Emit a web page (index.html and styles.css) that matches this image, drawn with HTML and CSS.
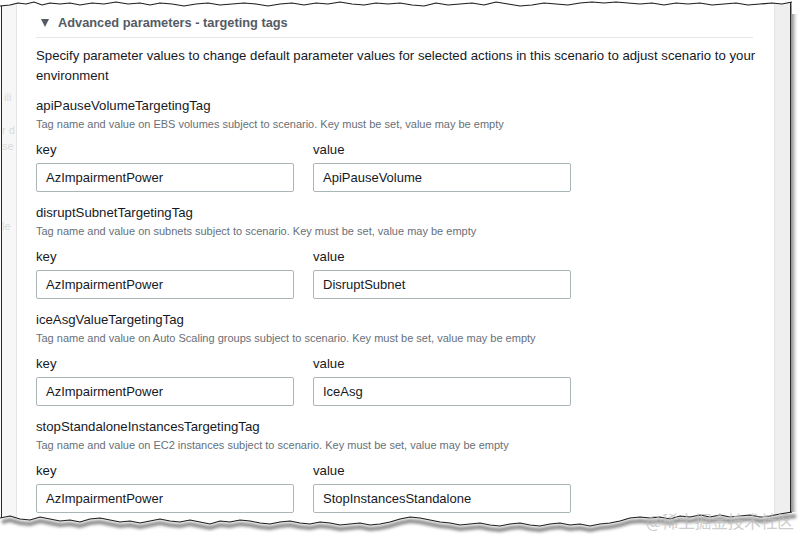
FILE: index.html
```html
<!DOCTYPE html>
<html>
<head>
<meta charset="utf-8">
<link rel="stylesheet" href="styles.css">
</head>
<body>
<div class="page">
  <div class="sheet">
    <div class="side-left">
      <div class="ghost g1">ili</div>
      <div class="ghost g2">r d</div>
      <div class="ghost g3">se</div>
      <div class="ghost g4">le</div>
    </div>
    <div class="panel">
      <div class="expander"><span class="caret"></span>Advanced parameters - targeting tags</div>
      <p class="intro">Specify parameter values to change default parameter values for selected actions in this scenario to adjust scenario to your environment</p>

      <div class="param">
        <div class="param-name">apiPauseVolumeTargetingTag</div>
        <div class="param-desc">Tag name and value on EBS volumes subject to scenario. Key must be set, value may be empty</div>
        <div class="pair">
          <div class="field"><div class="field-label">key</div><div class="input">AzImpairmentPower</div></div>
          <div class="field"><div class="field-label">value</div><div class="input">ApiPauseVolume</div></div>
        </div>
      </div>

      <div class="param">
        <div class="param-name">disruptSubnetTargetingTag</div>
        <div class="param-desc">Tag name and value on subnets subject to scenario. Key must be set, value may be empty</div>
        <div class="pair">
          <div class="field"><div class="field-label">key</div><div class="input">AzImpairmentPower</div></div>
          <div class="field"><div class="field-label">value</div><div class="input">DisruptSubnet</div></div>
        </div>
      </div>

      <div class="param">
        <div class="param-name">iceAsgValueTargetingTag</div>
        <div class="param-desc">Tag name and value on Auto Scaling groups subject to scenario. Key must be set, value may be empty</div>
        <div class="pair">
          <div class="field"><div class="field-label">key</div><div class="input">AzImpairmentPower</div></div>
          <div class="field"><div class="field-label">value</div><div class="input">IceAsg</div></div>
        </div>
      </div>

      <div class="param">
        <div class="param-name">stopStandaloneInstancesTargetingTag</div>
        <div class="param-desc">Tag name and value on EC2 instances subject to scenario. Key must be set, value may be empty</div>
        <div class="pair">
          <div class="field"><div class="field-label">key</div><div class="input">AzImpairmentPower</div></div>
          <div class="field"><div class="field-label">value</div><div class="input">StopInstancesStandalone</div></div>
        </div>
      </div>
    </div>
    <div class="side-right"></div>
  </div>

  <svg class="tear tear-top" width="800" height="14" viewBox="0 0 800 14">
    <path class="tear-fill" d="M0,0 L800,0 L800,14 L792,14 L792,2 L782,4 772,3 760,4 748,5 736,3 724,4 712,5 700,3 688,4 676,3 664,5 652,3 640,4 628,3 616,2 604,3 592,2 580,3 568,5 556,4 544,3 532,5 520,6 508,4 496,2 484,5 472,3 460,4 448,5 436,3 424,6 412,5 400,3 388,4 376,3 364,5 352,4 340,2 328,4 316,3 304,5 292,3 280,4 268,6 256,4 244,3 232,4 220,5 208,3 196,4 184,6 172,4 160,3 150,5 140,3 128,4 116,2 104,4 92,3 80,5 70,3 60,4 50,3 42,5 34,2 26,4 18,3 10,5 0,6 Z"/>
    <polyline class="tear-line" points="0,6 10,5 18,3 26,4 34,2 42,5 50,3 60,4 70,3 80,5 92,3 104,4 116,2 128,4 140,3 150,5 160,3 172,4 184,6 196,4 208,3 220,5 232,4 244,3 256,4 268,6 280,4 292,3 304,5 316,3 328,4 340,2 352,4 364,5 376,3 388,4 400,3 412,5 424,6 436,3 448,5 460,4 472,3 484,5 496,2 508,4 520,6 532,5 544,3 556,4 568,5 580,3 592,2 604,3 616,2 628,3 640,4 652,3 664,5 676,3 688,4 700,3 712,5 724,4 736,3 748,5 760,4 772,3 782,4 792,2"/>
  </svg>

  <svg class="tear tear-bottom" width="800" height="38" viewBox="0 500 800 38">
    <defs>
      <filter id="soft" x="-5%" y="-50%" width="110%" height="200%"><feGaussianBlur stdDeviation="1.6"/></filter>
    </defs>
    <path class="tear-fill" d="M0,538 L0,518 L10,516 20,519 30,520 40,517 50,519 60,521 70,520 80,522 90,519 100,518 110,520 120,522 130,521 140,523 150,521 160,519 170,521 180,522 190,520 200,522 210,524 220,521 230,522 240,520 250,521 260,523 270,524 280,522 290,521 300,523 310,524 320,522 330,523 340,525 350,524 360,523 370,525 380,524 390,522 400,519 410,517 420,518 430,520 440,522 450,523 460,525 470,524 480,523 490,525 500,526 510,524 520,523 530,525 540,526 550,524 560,523 570,525 580,524 590,526 600,524 610,523 620,521 630,518 640,517 650,518 660,517 670,519 680,516 690,517 700,515 710,517 720,515 730,517 740,516 750,515 760,517 770,516 780,514 792,512 L800,512 L800,538 Z"/>
    <polyline class="tear-shadow" filter="url(#soft)" points="2,522 10,520 20,523 30,524 40,521 50,523 60,525 70,524 80,526 90,523 100,522 110,524 120,526 130,525 140,527 150,525 160,523 170,525 180,526 190,524 200,526 210,528 220,525 230,526 240,524 250,525 260,527 270,528 280,526 290,525 300,527 310,528 320,526 330,527 340,529 350,528 360,527 370,529 380,528 390,526 400,523 410,521 420,522 430,524 440,526 450,527 460,529 470,528 480,527 490,529 500,530 510,528 520,527 530,529 540,530 550,528 560,527 570,529 580,528 590,530 600,528 610,527 620,525 630,522 640,521 650,522 660,521 670,523 680,520 690,521 700,519 710,521 720,519 730,521 740,520 750,519 760,521 770,520 780,518 796,516"/>
    <polyline class="tear-line" points="0,518 10,516 20,519 30,520 40,517 50,519 60,521 70,520 80,522 90,519 100,518 110,520 120,522 130,521 140,523 150,521 160,519 170,521 180,522 190,520 200,522 210,524 220,521 230,522 240,520 250,521 260,523 270,524 280,522 290,521 300,523 310,524 320,522 330,523 340,525 350,524 360,523 370,525 380,524 390,522 400,519 410,517 420,518 430,520 440,522 450,523 460,525 470,524 480,523 490,525 500,526 510,524 520,523 530,525 540,526 550,524 560,523 570,525 580,524 590,526 600,524 610,523 620,521 630,518 640,517 650,518 660,517 670,519 680,516 690,517 700,515 710,517 720,515 730,517 740,516 750,515 760,517 770,516 780,514 792,512"/>
  </svg>

  <div class="watermark">@稀土掘金技术社区</div>
</div>
</body>
</html>
```

FILE: styles.css
```css
* { box-sizing: border-box; }
html, body { margin: 0; padding: 0; background: #ffffff; }
body {
  font-family: "Liberation Sans", Arial, sans-serif;
  color: #16191f;
}
.page {
  position: relative;
  width: 800px;
  height: 538px;
  overflow: hidden;
  background: #ffffff;
}
.sheet {
  display: flex;
  margin-left: 1px;
  width: 790px;
  height: 530px;
  border-left: 1px solid #2a2a2a;
  border-right: 1px solid #2a2a2a;
  box-shadow: 3px 2px 4px rgba(0, 0, 0, 0.45);
  background: #ffffff;
}
.side-left {
  position: relative;
  width: 14px;
  flex: none;
  background: #f7f7f7;
  overflow: hidden;
}
.ghost {
  position: absolute;
  left: 2px;
  font-size: 11px;
  line-height: 12px;
  color: #d9dbdc;
  white-space: nowrap;
}
.g1 { top: 91px; }
.g2 { top: 124px; left: 0; }
.g3 { top: 140px; left: 0; }
.g4 { top: 220px; left: 0; }
.panel {
  flex: 1;
  background: #ffffff;
  border-left: 1px solid #e4e6e6;
  border-right: 1px solid #e4e6e6;
  padding: 13px 21px 0 19px;
}
.side-right {
  width: 15px;
  flex: none;
  background: #efefef;
}
.expander {
  display: flex;
  align-items: center;
  height: 25px;
  padding-bottom: 4px;
  margin-bottom: 1px;
  border-bottom: 1px solid #e6e8e8;
  font-size: 12.8px;
  font-weight: bold;
  color: #545b64;
  line-height: 20px;
}
.caret {
  width: 0;
  height: 0;
  margin: 0 9px 0 5px;
  border-left: 4.5px solid transparent;
  border-right: 4.5px solid transparent;
  border-top: 8px solid #545b64;
}
.intro {
  margin: 8px -10px 10px 0;
  font-size: 13.2px;
  line-height: 20px;
}
.param {
  padding-bottom: 11px;
}
.param-name {
  font-size: 13.2px;
  line-height: 20px;
}
.param-desc {
  font-size: 11px;
  line-height: 16px;
  color: #687078;
}
.pair {
  display: grid;
  grid-template-columns: 258px 258px;
  column-gap: 19px;
  margin-top: 8px;
}
.field-label {
  font-size: 13.2px;
  line-height: 20px;
}
.input {
  margin-top: 3px;
  height: 29px;
  border: 1px solid #aab7b8;
  border-radius: 2px;
  padding: 0 9px;
  display: flex;
  align-items: center;
  font-size: 13px;
}
.tear {
  position: absolute;
  left: 0;
}
.tear-top { top: 0; }
.tear-bottom { top: 500px; }
.tear-fill { fill: #ffffff; }
.tear-line {
  fill: none;
  stroke: #1d1d1d;
  stroke-width: 1.1;
}
.tear-shadow {
  fill: none;
  stroke: rgba(0, 0, 0, 0.45);
  stroke-width: 4;
}
.watermark {
  position: absolute;
  left: 646px;
  top: 510px;
  font-family: "Noto Sans CJK SC", sans-serif;
  font-size: 17px;
  line-height: 22px;
  color: rgba(190, 190, 190, 0.75);
  letter-spacing: -0.5px;
  white-space: nowrap;
}
```
